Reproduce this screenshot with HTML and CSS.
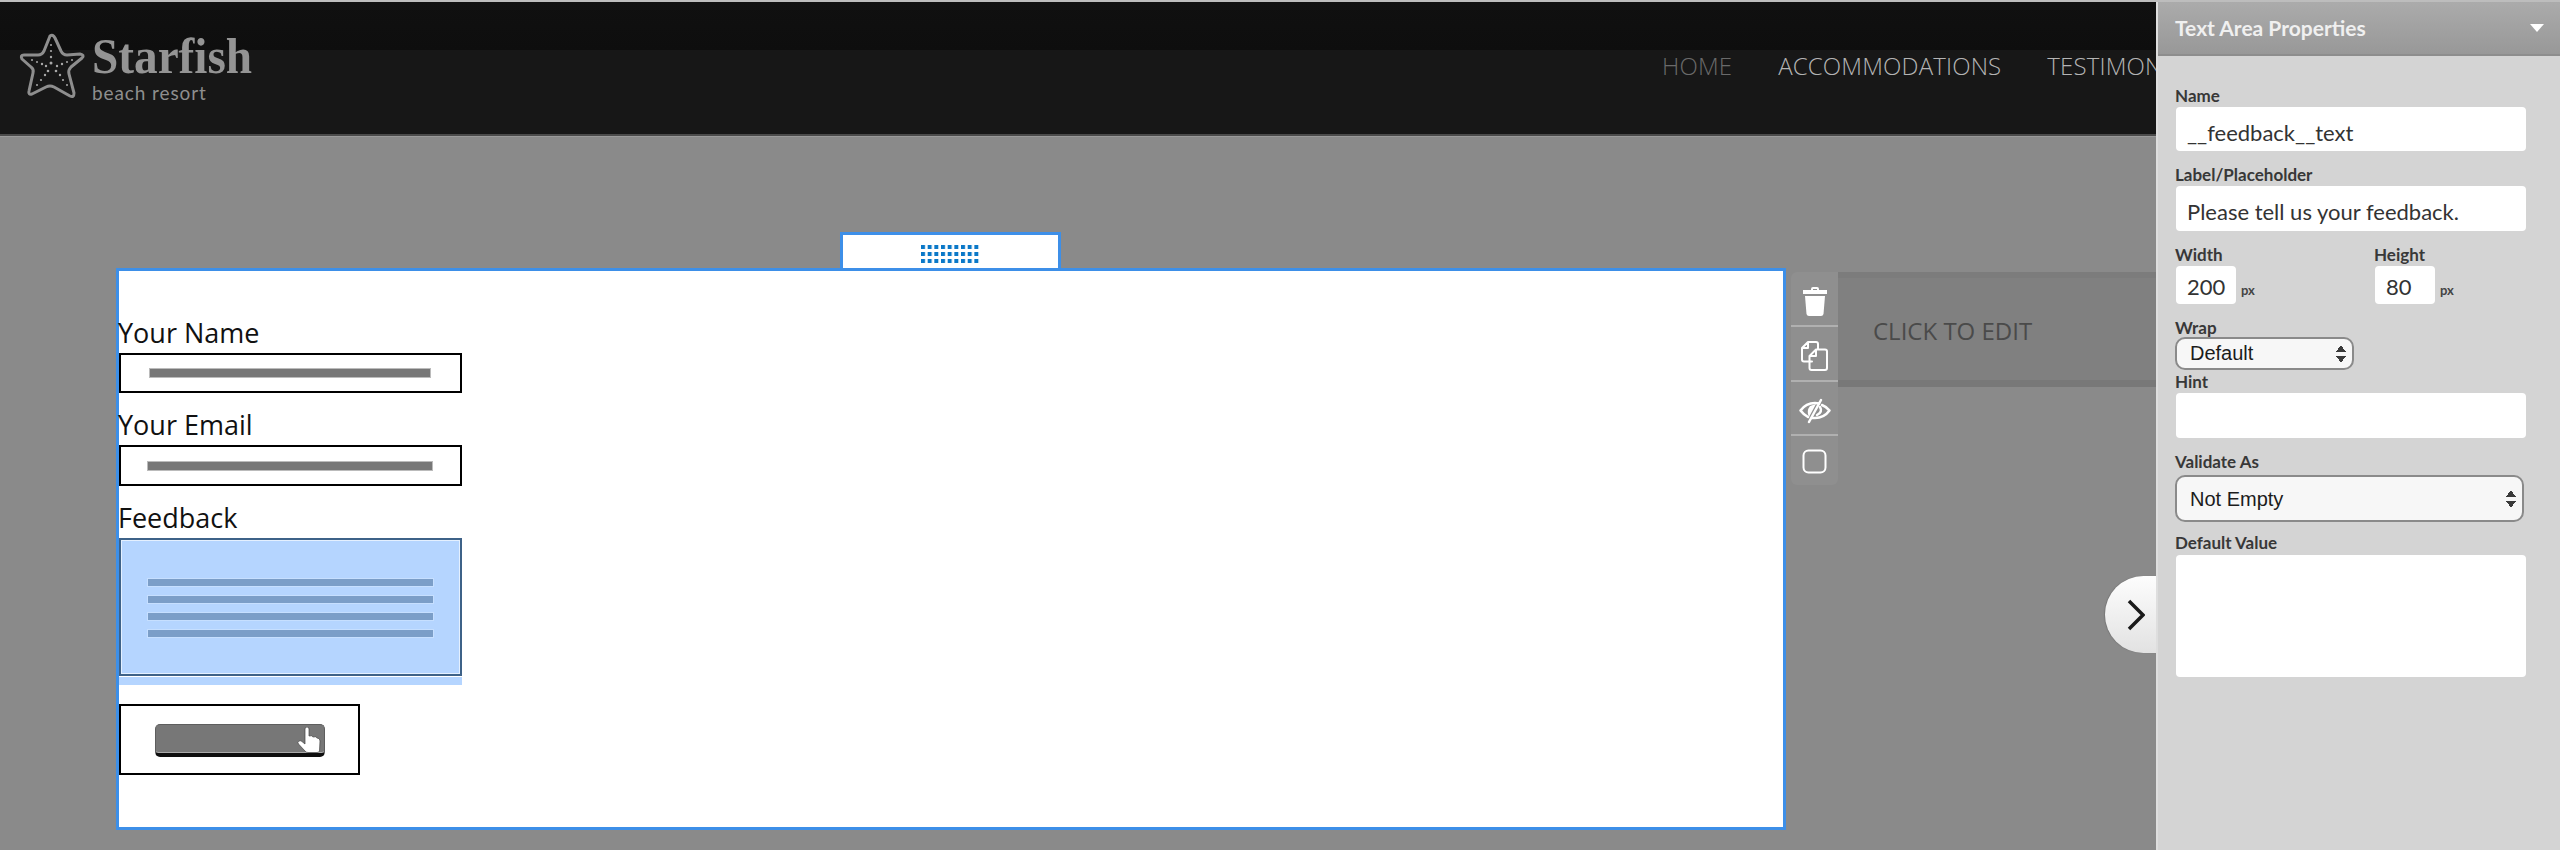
FILE: index.html
```html
<!DOCTYPE html>
<html lang="en">
<head>
<meta charset="utf-8">
<title>Text Area Properties</title>
<link rel="stylesheet" href="styles.css">
</head>
<body>
<header class="site-header">
  <div class="logo">
    <svg class="logo-star" viewBox="0 0 70 70" width="70" height="70" aria-hidden="true">
      <path class="star-line" d="M33 5 Q36 3 38 7 L44 20 Q46 24 50 24 L63 23 Q68 24 65 27 L54 36 Q51 39 52 43 L57 62 Q57 67 53 65 L37 56 Q33 54 29 56 L15 63 Q11 64 12 60 L16 42 Q17 38 14 36 L5 28 Q3 24 7 24 L21 24 Q25 24 27 20 Z"/>
      <g class="star-dots">
        <circle cx="34" cy="14" r="1"/><circle cx="34" cy="20" r="1.1"/><circle cx="34" cy="26" r="1.2"/><circle cx="34" cy="32" r="1.5"/>
        <circle cx="15" cy="29" r="1"/><circle cx="20" cy="31" r="1"/><circle cx="25" cy="33" r="1.2"/><circle cx="29" cy="35" r="1.2"/>
        <circle cx="55" cy="29" r="1"/><circle cx="50" cy="31" r="1"/><circle cx="45" cy="33" r="1.2"/><circle cx="40" cy="35" r="1.2"/>
        <circle cx="20" cy="54" r="1"/><circle cx="24" cy="49" r="1.1"/><circle cx="28" cy="44" r="1.2"/><circle cx="31" cy="40" r="1.3"/>
        <circle cx="50" cy="54" r="1"/><circle cx="46" cy="49" r="1.1"/><circle cx="43" cy="44" r="1.2"/><circle cx="39" cy="40" r="1.3"/>
      </g>
    </svg>
    <div class="logo-words">
      <div class="logo-name">Starfish</div>
      <div class="logo-sub">beach resort</div>
    </div>
  </div>
  <nav class="site-nav">
    <a class="nav-link nav-current">HOME</a>
    <a class="nav-link">ACCOMMODATIONS</a>
    <a class="nav-link">TESTIMONIALS</a>
  </nav>
</header>

<main class="stage">
  <section class="editor">
    <div class="drag-tab">
      <svg width="60" height="21" viewBox="0 0 60 21" aria-hidden="true">
        <defs>
          <pattern id="grip" width="6.67" height="7" patternUnits="userSpaceOnUse">
            <rect width="4" height="4" fill="#0a78c8"/>
          </pattern>
        </defs>
        <rect width="60" height="21" fill="url(#grip)"/>
      </svg>
    </div>
    <div class="canvas">
      <div class="form-label">Your Name</div>
      <div class="form-box form-input"><span class="bar bar-name"></span></div>
      <div class="form-label form-label-next">Your Email</div>
      <div class="form-box form-input form-input-email"><span class="bar bar-email"></span></div>
      <div class="form-label form-label-next">Feedback</div>
      <div class="form-area">
        <span class="area-line"></span><span class="area-line"></span><span class="area-line"></span><span class="area-line"></span>
      </div>
      <div class="form-area-strip"></div>
      <div class="form-box form-submit">
        <div class="submit-button">
          <svg class="hand" width="24" height="26" viewBox="0 0 24 26" aria-hidden="true">
            <path d="M8 2 Q8 0 10 0 Q12 0 12 2 L12 9 Q15 8 16 10 Q19 9 20 11 Q23 11 23 14 L22.5 24 Q22 25.500 20 25.500 L11 25.500 Q9 25.500 8 24 L1.500 17 Q0 15 2 14 Q4 13 5.500 15 L8 17 Z"/>
          </svg>
        </div>
      </div>
    </div>
  </section>

  <aside class="tools">
    <button class="tool">
      <svg width="26" height="30" viewBox="0 0 26 30" aria-hidden="true"><path class="icon-fill" d="M9 3 Q9 1 11 1 L15 1 Q17 1 17 3 L17 4 L25 4 L25 8 L1 8 L1 4 L9 4 Z M11 3 L11 4 L15 4 L15 3 Z"/><path class="icon-fill" d="M3 10 L23 10 L21.500 28 Q21 30 19 30 L7 30 Q5 30 4.500 28 Z"/></svg>
    </button>
    <button class="tool">
      <svg width="27" height="30" viewBox="0 0 27 30" aria-hidden="true"><path class="icon-line" d="M11 20.500 L3 20.500 Q1 20.500 1 18.500 L1 7 L7 1 L15 1 Q17 1 17 3 L17 8 M1 7 L7 7 L7 1"/><path class="icon-line" d="M8.500 15 L15 8.500 L24 8.500 Q26 8.500 26 10.500 L26 27 Q26 29 24 29 L10.500 29 Q8.500 29 8.500 27 Z M8.500 15 L15 15 L15 8.500"/></svg>
    </button>
    <button class="tool">
      <svg width="32" height="26" viewBox="0 0 32 26" aria-hidden="true"><path class="icon-line icon-bold" d="M9 19 Q4 16 1.500 12.500 Q7 5 16 5 Q18 5 20 5.500 M23 7 Q28 9 30.500 12.500 Q25 20 16 20 Q14 20 13 20"/><path class="icon-fill" d="M11 8 L17 6 L10 19 Q7 13 11 8 Z"/><path class="icon-line icon-bold" d="M22 2 L10 24"/><path class="icon-line icon-bold" d="M21 9 Q24 14 18 17"/></svg>
    </button>
    <button class="tool">
      <svg width="25" height="25" viewBox="0 0 25 25" aria-hidden="true"><rect class="icon-line" x="1.500" y="1.500" width="22" height="22" rx="5"/></svg>
    </button>
  </aside>

  <div class="next-section">
    <div class="next-section-text">CLICK TO EDIT</div>
  </div>
</main>

<button class="slide-next" aria-label="Next">
  <svg width="18" height="32" viewBox="0 0 18 32" aria-hidden="true"><path d="M2 2 L16 16 L2 30"/></svg>
</button>

<aside class="panel">
  <div class="panel-head">
    <span class="panel-title">Text Area Properties</span>
    <span class="panel-caret"></span>
  </div>
  <div class="panel-body">
    <div class="field-label field-name">Name</div>
    <div class="field-input">__feedback__text</div>
    <div class="field-label field-gap">Label/Placeholder</div>
    <div class="field-input field-tall">Please tell us your feedback.</div>
    <div class="size-row">
      <div class="size-col">
        <div class="field-label">Width</div>
        <div class="size-line"><div class="field-input size-input">200</div><span class="unit">px</span></div>
      </div>
      <div class="size-col">
        <div class="field-label">Height</div>
        <div class="size-line"><div class="field-input size-input">80</div><span class="unit">px</span></div>
      </div>
    </div>
    <div class="field-label field-wrap">Wrap</div>
    <div class="select select-small">Default<span class="select-arrows"></span></div>
    <div class="field-label field-hint">Hint</div>
    <div class="field-input field-tall"></div>
    <div class="field-label field-gap field-validate">Validate As</div>
    <div class="select select-large">Not Empty<span class="select-arrows"></span></div>
    <div class="field-label field-default">Default Value</div>
    <div class="field-input field-textarea"></div>
  </div>
</aside>
</body>
</html>
```
FILE: styles.css
```css
* { box-sizing: border-box; }
html, body { margin: 0; padding: 0; }
body {
  width: 2560px;
  height: 850px;
  overflow: hidden;
  position: relative;
  background: #8a8a8a;
  border-top: 2px solid #bdbdbd;
  font-family: "Open Sans", sans-serif;
}

/* Site header */
.site-header {
  height: 134px;
  display: flex;
  align-items: flex-start;
  overflow: hidden;
  background: linear-gradient(#101010 0, #0e0e0e 48px, #171717 48px, #171717 100%);
  border-bottom: 2px solid #4b4b4b;
  box-shadow: 0 1px 0 #9a9a9a;
}
.logo { display: flex; align-items: flex-start; padding: 29px 0 0 17px; }
.logo-star { margin-right: 5px; flex: none; }
.star-line { fill: none; stroke: #8e8e8e; stroke-width: 3; stroke-linejoin: round; }
.star-dots { fill: #a8a8a8; }
.logo-words { display: flex; flex-direction: column; }
.logo-name {
  font: bold 50px/50px "Liberation Serif", serif;
  color: #949494;
  transform: scaleX(0.945);
  transform-origin: left center;
}
.logo-sub {
  font: 400 19px/20px "Lato", sans-serif;
  color: #8e8e8e;
  letter-spacing: 0.9px;
  margin-top: 2px;
}
.site-nav {
  margin-left: auto;
  width: 898px;
  flex: none;
  display: flex;
  gap: 46px;
  padding-top: 47px;
  white-space: nowrap;
}
.nav-link { font: 300 24px/34px "Open Sans", sans-serif; color: #b4b4b4; letter-spacing: 0.15px; }
.nav-current { color: #6a6a6a; }

/* Stage */
.stage { display: flex; align-items: flex-start; padding: 96px 0 0 116px; }
.editor { width: 1670px; flex: none; display: flex; flex-direction: column; }
.drag-tab {
  width: 221px;
  height: 36px;
  margin-left: 724px;
  background: #fff;
  border: 3px solid #3d8fe8;
  border-bottom: 0;
  display: flex;
  justify-content: center;
  padding-top: 10px;
}
.canvas {
  height: 562px;
  background: #fff;
  border: 3px solid #3d8fe8;
  padding-top: 44px;
}

.form-label {
  font: 400 27px/36px "Open Sans", sans-serif;
  color: #111;
  margin-left: -1px;
}
.form-label-next { margin-top: 14px; }
.form-box { border: 2px solid #000; background: #fff; }
.form-input {
  width: 343px;
  height: 40px;
  margin-top: 2px;
  display: flex;
  align-items: center;
}
.form-input-email { height: 41px; }
.bar { display: block; height: 8px; background: #777; outline: 1px solid #bbb; }
.bar-name { width: 280px; margin-left: 29px; }
.bar-email { width: 284px; margin-left: 27px; }
.form-area {
  width: 343px;
  height: 138px;
  margin-top: 2px;
  background: #b5d5ff;
  border: 2px solid #3e6288;
  box-shadow: inset 0 0 0 1px #e4f0ff;
  display: flex;
  flex-direction: column;
  gap: 10px;
  padding: 39px 27px 0;
}
.area-line { display: block; height: 7px; background: #7b9ec8; outline: 1px solid #c6dfff; }
.form-area-strip { width: 343px; height: 8px; margin-top: 1px; background: #b5d5ff; }
.form-submit {
  width: 241px;
  height: 71px;
  margin-top: 19px;
  padding: 18px 0 0 34px;
}
.submit-button {
  width: 170px;
  height: 33px;
  position: relative;
  background: #777;
  border: 1px solid #5e5e5e;
  border-bottom: 4px solid #0e0e0e;
  border-radius: 5px;
  box-shadow: inset 0 -1px 0 #aaa;
}
.hand { position: absolute; top: 2px; left: 141px; }
.hand path { fill: #fff; stroke: #444; stroke-width: 0.7; }

/* Tools */
.tools {
  width: 47px;
  height: 213px;
  margin: 40px 0 0 5px;
  flex: none;
  background: #8f8f8f;
  border-radius: 6px 0 6px 6px;
  display: flex;
  flex-direction: column;
}
.tool {
  flex: 1;
  padding: 6px 0 0;
  background: none;
  border: 0;
  border-bottom: 2px solid #b0b0b0;
  display: flex;
  align-items: center;
  justify-content: center;
}
.tool:last-child { border-bottom: 0; padding-top: 2px; }
.icon-fill { fill: #fff; }
.icon-line { fill: none; stroke: #fff; stroke-width: 2; stroke-linejoin: round; stroke-linecap: round; }
.icon-bold { stroke-width: 2.5; }

.next-section {
  flex: 1;
  height: 115px;
  margin-top: 40px;
  background: #808080;
  border-top: 6px solid #7c7c7c;
  border-bottom: 7px solid #787878;
  padding: 38px 0 0 35px;
}
.next-section-text { font: 400 24px/30px "Open Sans", sans-serif; color: #4a4a4a; }

/* Slide arrow */
.slide-next {
  position: absolute;
  left: 2105px;
  top: 574px;
  width: 60px;
  height: 77px;
  padding: 0 0 0 22px;
  border: 0;
  border-radius: 39px 0 0 39px;
  background: linear-gradient(#fdfdfd, #e2e2e2);
  box-shadow: -1px 0 1px #777;
  display: flex;
  align-items: center;
}
.slide-next path { fill: none; stroke: #1a1a1a; stroke-width: 3.500; }

/* Properties panel */
.panel {
  position: absolute;
  top: 0;
  right: 0;
  bottom: 0;
  width: 404px;
  background: #d4d4d4;
  border-left: 2px solid #dedede;
  font-family: "Lato", sans-serif;
}
.panel-head {
  height: 54px;
  display: flex;
  align-items: center;
  justify-content: space-between;
  padding: 0 16px 0 17px;
  background: linear-gradient(#ababab, #989898);
  border-bottom: 2px solid #8d8d8d;
}
.panel-title { font: 700 21px/24px "Lato", sans-serif; color: #f0f0f0; }
.panel-caret {
  width: 0;
  height: 0;
  border-left: 7px solid transparent;
  border-right: 7px solid transparent;
  border-top: 8px solid #fff;
}
.panel-body { padding: 31px 0 0 18px; }
.field-label { font: 700 17px/18px "Lato", sans-serif; color: #383838; margin-left: -1px; }
.field-gap { margin-top: 15px; }
.field-input {
  width: 350px;
  height: 44px;
  margin-top: 2px;
  padding-left: 11px;
  background: #fff;
  border-radius: 4px;
  font: 400 22px/51px "Lato", sans-serif;
  color: #333;
}
.field-tall { height: 45px; line-height: 52px; }
.size-row { display: flex; margin-top: 15px; }
.size-col { width: 199px; flex: none; }
.size-line { display: flex; align-items: flex-end; }
.size-input { width: 60px; height: 38px; line-height: 42px; }
.unit { font: 700 13px/16px "Lato", sans-serif; color: #444; margin: 0 0 6px 5px; }
.field-wrap { margin-top: 15px; }
.select {
  position: relative;
  background: #f7f7f7;
  border: 2px solid #8a8a8a;
  border-radius: 10px;
  font-family: "Liberation Sans", sans-serif;
  color: #1c1c1c;
  margin-left: -1px;
  padding-left: 13px;
}
.select-small { width: 179px; height: 33px; font-size: 20px; line-height: 28px; }
.select-large { width: 349px; height: 47px; margin-top: 4px; font-size: 20px; line-height: 44px; }
.select-arrows {
  position: absolute;
  right: 6px;
  top: 50%;
  width: 10px;
  height: 18px;
  margin-top: -9px;
  background:
    linear-gradient(to top left, #3a3a3a 50%, transparent 50%) 0 0 / 5px 7px no-repeat,
    linear-gradient(to top right, #3a3a3a 50%, transparent 50%) 5px 0 / 5px 7px no-repeat,
    linear-gradient(to bottom left, #3a3a3a 50%, transparent 50%) 0 11px / 5px 7px no-repeat,
    linear-gradient(to bottom right, #3a3a3a 50%, transparent 50%) 5px 11px / 5px 7px no-repeat;
}
.field-hint { margin-top: 3px; }
.field-default { margin-top: 12px; }
.field-textarea { height: 122px; margin-top: 3px; }
```
